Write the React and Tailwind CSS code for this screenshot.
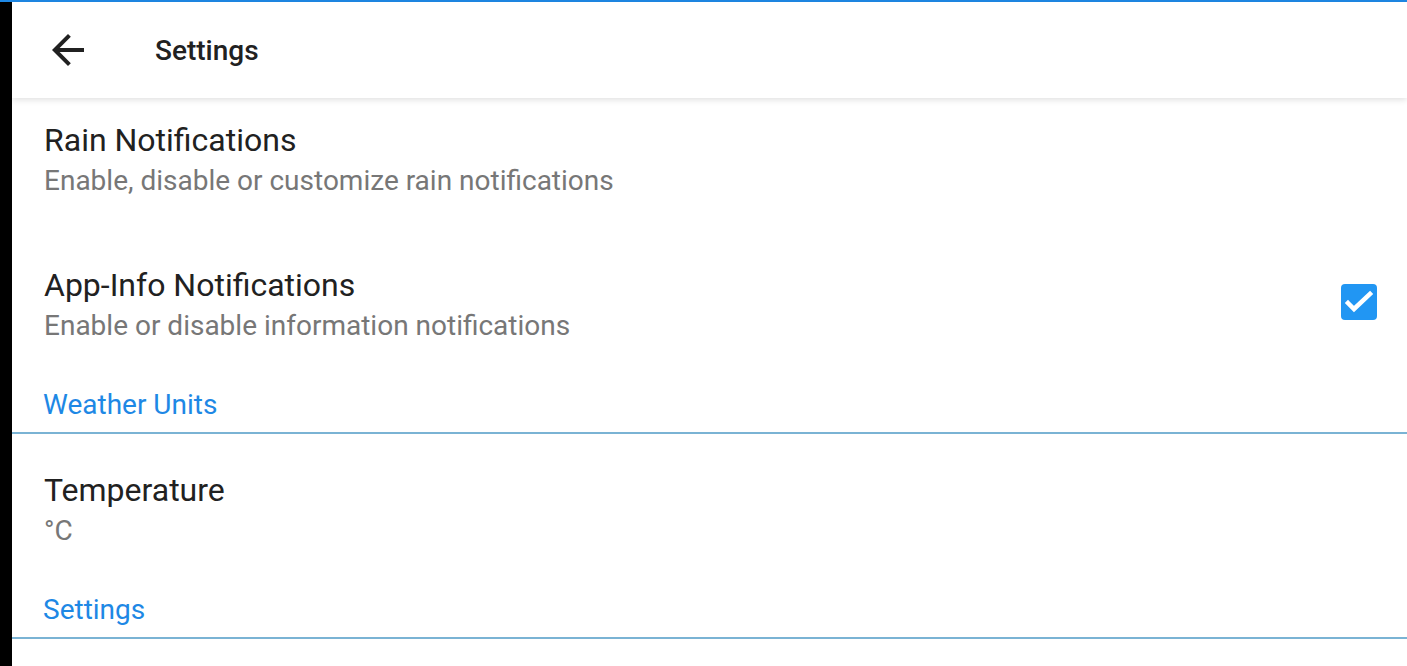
import React from 'react';

const PrefItem = ({ title, summary, checked, className = '' }) => (
  <div className={`flex items-center pl-[32px] pr-[30px] ${className}`}>
    <div className="flex-1 flex flex-col">
      <span className="text-[32px] leading-[40px] text-[#212121]">{title}</span>
      <span className="text-[28px] leading-[42px] text-[#777777]">{summary}</span>
    </div>
    {checked && (
      <div className="w-[36px] h-[36px] -mt-[8px] rounded-[4px] bg-[#2196f3]">
        <svg width="36" height="36" viewBox="0 0 36 36" fill="none" stroke="white" strokeWidth="4.5" strokeLinecap="square">
          <path d="M7 19l6 6L29 10" />
        </svg>
      </div>
    )}
  </div>
);

const Category = ({ title }) => (
  <div className="pb-[7px] pl-[31px] border-b-2 border-[#7ab3d4]">
    <span className="block text-[28px] leading-[40px] text-[#1e88e5]">{title}</span>
  </div>
);

export default function App() {
  return (
    <div className="w-[1407px] h-[666px] flex bg-black overflow-hidden" style={{ fontFamily: 'Roboto, sans-serif' }}>
      <div className="w-[12px] shrink-0" />
      <div className="flex-1 bg-white flex flex-col">
        <div className="h-[2px] bg-[#1e88e5] -ml-[12px]" />
        {/* toolbar */}
        <header className="h-[96px] shrink-0 flex items-center bg-white shadow-[0_2px_6px_rgba(0,0,0,0.12)] relative z-10">
          <div className="w-[143px] flex items-center pl-[32px]">
            <svg width="48" height="48" viewBox="0 0 24 24" fill="#212121">
              <path d="M20 11H7.83l5.59-5.59L12 4l-8 8 8 8 1.41-1.41L7.83 13H20v-2z" />
            </svg>
          </div>
          <h1 className="text-[28px] font-medium text-[#212121] mt-[2px]">Settings</h1>
        </header>
        <PrefItem className="pt-[22px] pb-[32px]" title="Rain Notifications" summary="Enable, disable or customize rain notifications" />
        <PrefItem className="pt-[31px] pb-[38px]" title="App-Info Notifications" summary="Enable or disable information notifications" checked />
        <Category title="Weather Units" />
        <PrefItem className="pt-[36px] pb-[38px]" title="Temperature" summary="°C" />
        <Category title="Settings" />
      </div>
    </div>
  );
}
